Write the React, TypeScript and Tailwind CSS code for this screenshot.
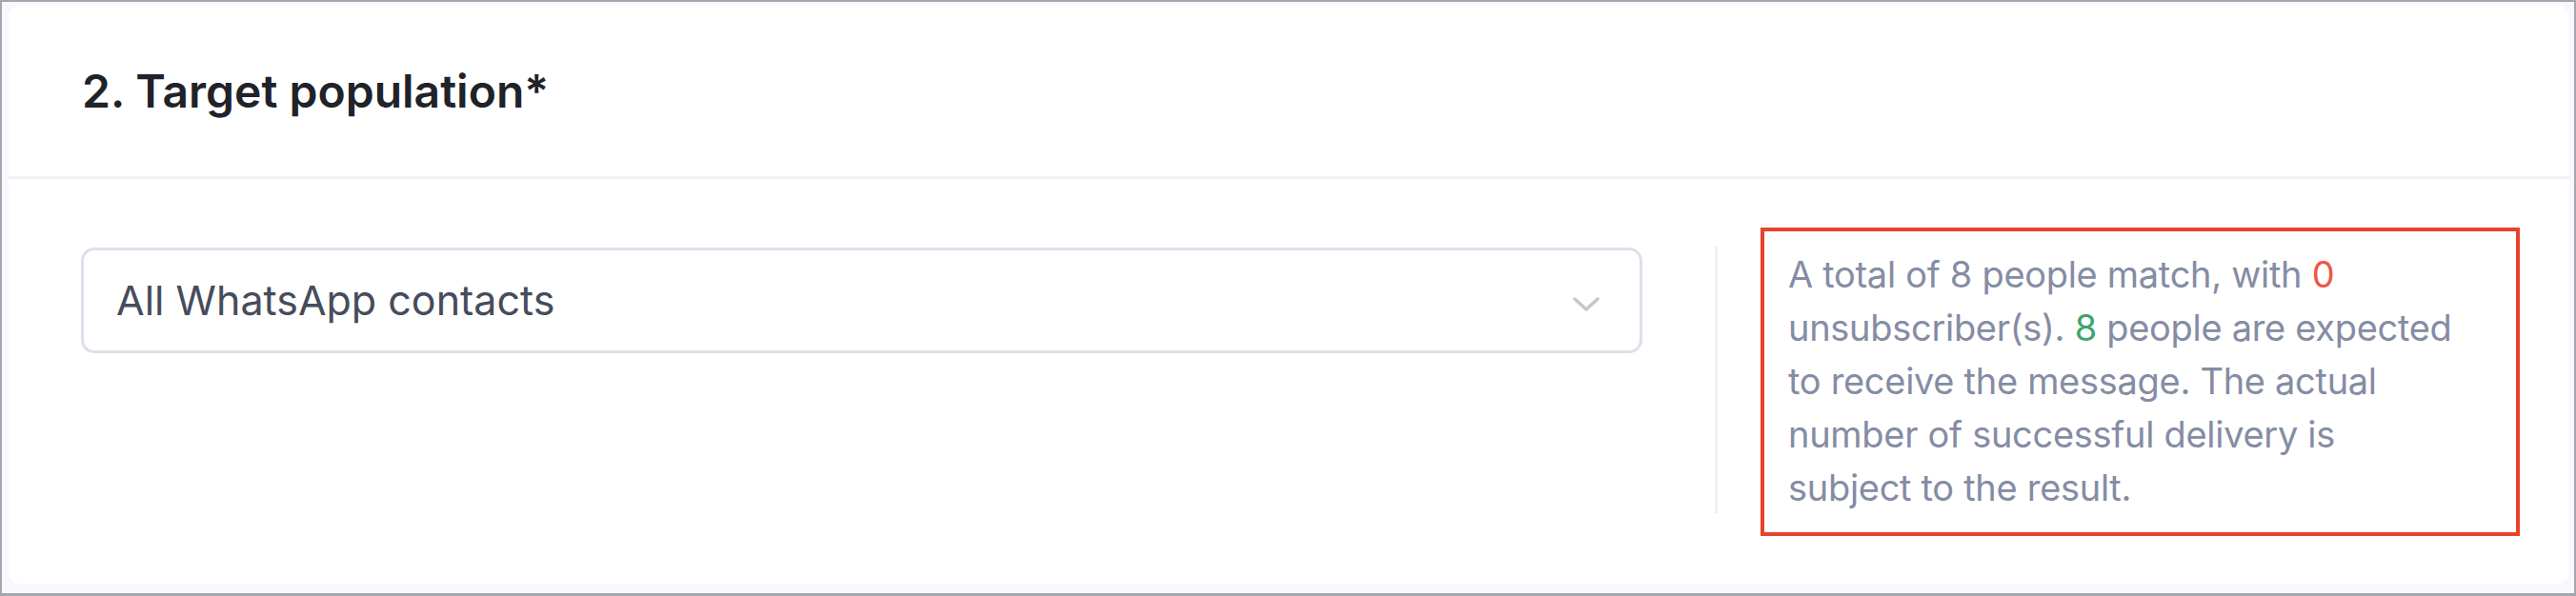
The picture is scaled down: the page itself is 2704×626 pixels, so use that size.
export default function App() {
  return (
    <div
      className="flex h-[626px] w-full flex-col border-2 border-b-[3px] border-[#a6a7ad] bg-[#f7f8fc] pt-[4px] pr-[5px] pb-[10px] pl-[7px]"
      style={{ fontFamily: "Inter, 'Noto Sans', sans-serif" }}
    >
      <div className="flex flex-1 flex-col rounded-[12px] bg-white">
        <div className="flex h-[179px] items-center pl-[77px]">
          <h2 className="text-[48px] leading-none font-semibold text-[#1f2329]">
            2. Target population*
          </h2>
        </div>
        <div className="h-[3px] bg-[#f0f1f4]" />

        <div className="flex items-start px-[76px] pt-[51px]">
          <div className="mt-[21px] flex h-[111px] w-[1639px] shrink-0 items-center justify-between rounded-[14px] border-[3px] border-[#dde0ea] pr-[42px] pl-[34px]">
            <span className="text-[43px] leading-none text-[#464c5b]">All WhatsApp contacts</span>
            <svg width="28" height="16" viewBox="0 0 28 16" fill="none" className="mt-[8px]">
              <path
                d="M2 2L14 13L26 2"
                stroke="#c3c7d1"
                strokeWidth="3.5"
                strokeLinecap="round"
                strokeLinejoin="round"
              />
            </svg>
          </div>

          <div className="mt-[20px] ml-[76px] h-[280px] w-[3px] shrink-0 bg-[#eef0f5]" />

          <div className="ml-[45px] h-[324px] w-[797px] shrink-0 border-4 border-[#e8432d] pt-[17px] pl-[25px]">
            <p className="w-[706px] text-[38px] leading-[56px] tracking-[-0.3px] text-[#858ca4]">
              A total of 8 people match, with <span className="text-[#f05545]">0</span>{" "}
              unsubscriber(s). <span className="text-[#3aa56a]">8</span> people are expected to
              receive the message. The actual number of successful delivery is subject to the
              result.
            </p>
          </div>
        </div>
      </div>
    </div>
  );
}
